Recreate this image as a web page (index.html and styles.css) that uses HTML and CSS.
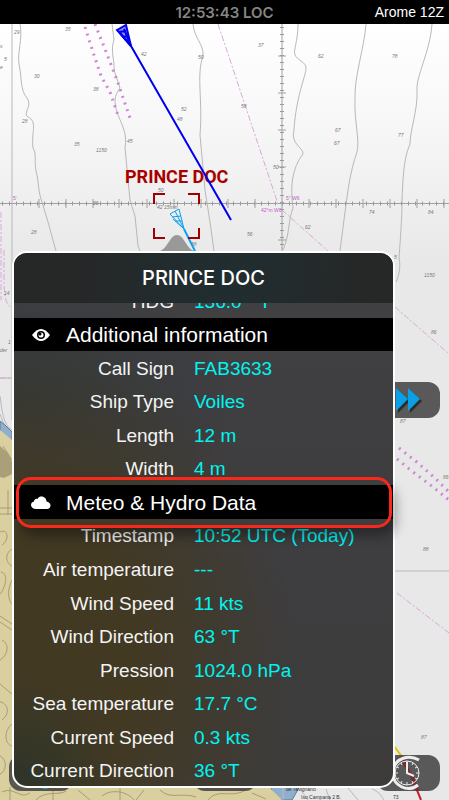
FILE: index.html
```html
<!DOCTYPE html>
<html lang="en">
<head>
    <meta charset="UTF-8">
    <meta name="viewport" content="width=device-width, initial-scale=1.0">
    <title>PRINCE DOC</title>
    <link rel="stylesheet" href="styles.css">
</head>
<body>
    <header class="status-bar">
        <span></span>
        <time class="clock">12:53:43 LOC</time>
        <span class="model">Arome 12Z</span>
    </header>

    <main class="chart">
        <svg class="map" viewBox="0 24 449 776" preserveAspectRatio="xMinYMin slice" aria-hidden="true">
            <!-- depth contours -->
            <g class="contour">
                <path d="M20 24C23 40 17 52 19 64C22 78 20 90 27 98C33 106 22 114 28 117C38 122 31 132 33 148C37 155 34 160 36 171C39 182 38 192 42 202L48 222L56 251"/>
                <path d="M112 24L114 40C110 50 115 62 114 70L120 88C114 96 114 102 117 112C120 122 128 132 125 148L130 200L135 216L138 246L140 251"/>
                <path d="M193 24C194 38 204 44 203 56C196 76 203 100 200 135L205 190L210 222L214 251"/>
                <path d="M298 24C298 42 293 50 295 55C297 60 306 62 306 68C306 76 296 96 294 130C290 144 304 148 303 154C292 168 290 186 293 208C288 220 290 234 283 250"/>
                <path d="M366 24C364 50 354 76 355 100C354 120 360 140 357 152C350 172 348 190 345 212L340 251"/>
                <path d="M432 24C430 52 416 76 417 90C418 110 410 130 410 144C403 160 403 180 402 200C402 216 401 230 399 258C401 266 399 276 396 282"/>
                <path d="M12 24V420M0 571H12M395 571H449M0 378H12"/>
                <path d="M0 396C2 410 3 425 12 430M0 414C4 424 6 432 12 435"/>
            </g>
            <!-- graduated meridian and parallel -->
            <path class="scale" d="M282 24V251M0 203.500H449"/>
            <path class="ticks" d="M282 27V251" stroke-width="4"/>
            <path class="ticks" d="M2 203.500H449" stroke-width="4"/>
            <path class="scale" d="M278 56H286M278 93H286M278 130H286M278 167H286M278 240H286M39 199V208M66 199V208M93 199V208M119 199V208M147 199V208M174 199V208M201 199V208M228 199V208M255 199V208M309 199V208M336 199V208M363 199V208M390 199V208M417 199V208M444 199V208"/>
            <!-- traffic limits -->
            <g class="limit">
                <path d="M218 24L278 204M282 210L328 251M395 307L449 354M397 593L449 633"/>
                <path d="M4 250V285C5 300 6 304 12 308M1 212V300"/>
                <path d="M0 378H12"/>
            </g>
            <g class="dots">
                <path d="M85 27L93 52L101 76L110 92L119 118"/>
                <path d="M95 24L103 44L110 62L117 80L130 118"/>
                <path d="M399 448L418 463L436 479L449 492"/>
                <path d="M397 459L413 472L433 487L449 500"/>
            </g>
            <!-- soundings -->
            <g class="sounding">
                <text x="14" y="34">29</text><text x="65" y="31">35</text><text x="141" y="56">42</text>
                <text x="34" y="78">30</text><text x="93" y="91">38</text><text x="177" y="121">48</text>
                <text x="181" y="111">52</text><text x="22" y="123">28</text><text x="198" y="59">50</text>
                <text x="258" y="47">37</text><text x="318" y="58">62</text><text x="392" y="58">78</text>
                <text x="241" y="108">58</text><text x="335" y="132">67</text><text x="334" y="145">67</text>
                <text x="398" y="137">77</text><text x="74" y="146">35</text><text x="96" y="152">1150</text>
                <text x="127" y="143">45</text><text x="273" y="169">50</text><text x="93" y="205">36</text>
                <text x="31" y="234">28</text><text x="247" y="236">56</text><text x="305" y="229">62</text>
                <text x="369" y="214">74</text><text x="428" y="214">84</text><text x="191" y="246">58</text>
                <text x="158" y="192">50</text><text x="157" y="209">42 15min</text>
                <text x="394" y="259">5</text><text x="424" y="277">1150</text><text x="431" y="334">86</text>
                <text x="400" y="423">87</text><text x="443" y="479">86</text><text x="423" y="551">88</text>
                <text x="421" y="739">87</text><text x="0" y="48">s</text><text x="4" y="61">5</text>
                <text x="0" y="69">e</text><text x="4" y="295">14</text><text x="8" y="344">1</text><text x="0" y="352">der</text>
            </g>
            <g class="place">
                <text x="13" y="200">5'</text>
                <text x="286" y="200">5'' W6</text>
                <text x="261" y="212">42°m W6</text>
            </g>
            <!-- land -->
            <path class="shallow" d="M0 421L5 425L12 432V442H0ZM270 786H300L292 800H276Z"/>
            <path class="land" d="M0 430L12 440V786H268L282 800H0Z"/>
            <path class="town" d="M0 446L8 453L12 462V474L4 478L0 477Z"/>
            <g class="relief">
                <path d="M0 456L12 472M3 446L12 460M0 508H12M0 514H12M8 490V515M0 532C8 528 10 540 2 545M12 549C4 554 6 563 12 566M1 572C10 574 4 590 0 594M12 580C7 590 8 600 12 604M0 616L12 624M0 622L12 630M2 640C10 644 8 655 0 660M0 684L12 694M0 702C6 702 12 712 2 720M12 724C4 730 4 744 12 746M0 756C8 760 6 772 0 774"/>
                <path d="M10 787V800M53 790V800M120 788V800M2 792C14 786 20 800 30 793M36 800C44 790 60 796 66 791M78 790L90 800M102 796C112 788 128 792 134 800M136 800L144 790M160 790C170 800 182 792 196 797M208 800C218 788 230 798 244 791M252 793L266 799"/>
            </g>
            <g class="contour">
                <path d="M300 789L308 800M326 789L330 800M348 788L358 800M372 789C380 792 382 797 384 800M283 788V800"/>
            </g>
            <g class="place-dark">
                <text x="286" y="791">de Tavignano</text>
                <text x="301" y="799">Iso Campana 2 B.</text>
                <text x="393" y="799">73</text>
            </g>
            <path class="route-yellow" d="M394 746L403 758"/>
            <path class="route-red" d="M400 757L412 778L421 800"/>
            <!-- vessels -->
            <text class="vessel-name" x="125" y="183">PRINCE DOC</text>
            <g class="vessel-blue">
                <path class="hull" d="M117 30L126 25L131 46Z"/>
                <path d="M131 46L231 220M120 33L131 46L124 29M119 32L126 31M123 37L128 36"/>
            </g>
            <g class="vessel-cyan">
                <path d="M184 229L195 251"/>
                <path class="hull" d="M170 214L179 209L184 229ZM173 219L184 229L175 211M172 217L181 216M175 221L182 221"/>
            </g>
            <path class="target" d="M154 204V194H165M188 194H199V204M154 228V238H165M188 238H199V228"/>
            <path class="pointer" d="M160 251C168 248 170 235 177 235C184 235 186 248 194 251Z"/>
        </svg>

        <button class="map-button forward" aria-label="Forward">
            <svg viewBox="0 0 64 36" aria-hidden="true">
                <path class="forward-shadow" d="M22 8L34 19L22 31ZM34 8L46 19L34 31Z"/>
                <path class="forward-arrow" d="M20 6L32 17L20 29ZM32 6L44 17L32 29Z"/>
            </svg>
        </button>

        <nav class="toolbar">
            <button class="map-button" aria-label="Layers">
                <svg viewBox="0 0 64 36" aria-hidden="true">
                    <circle class="layer-dot" cx="36" cy="28" r="6"/>
                </svg>
            </button>
            <button class="map-button" aria-label="Center"></button>
            <button class="map-button" aria-label="Time">
                <svg viewBox="0 0 64 36" aria-hidden="true">
                    <path class="route-dim" d="M25 2L37 24L45 44"/>
                    <g class="dial">
                        <circle cx="31" cy="18" r="12"/>
                        <path d="M31 6V9M31 27V30M19 18H22M40 18H43M25 8L26 10M37 8L36 10M21 12L23 13M41 12L39 13M21 24L23 23M25 28L26 26M37 28L36 26M41 24L39 23"/>
                        <path class="hands" d="M31 7V18L38 21"/>
                        <path class="ring" d="M43 5C33 -1 18 3 17 17C16 31 32 38 42 30"/>
                    </g>
                </svg>
            </button>
        </nav>

        <section class="popover">
            <h1 class="popover-title">PRINCE DOC</h1>
            <div class="popover-body">
                <table class="details">
                    <tbody>
                        <tr><th scope="row">HDG</th><td>136.0 ° T</td></tr>
                    </tbody>
                    <tbody>
                        <tr class="section">
                            <th colspan="2" scope="rowgroup">
                                <div class="section-title">
                                    <svg viewBox="0 0 20 16" aria-hidden="true">
                                        <path fill="#fff" d="M1 8C4 4 7 2 10 2S16 4 19 8C16 12 13 14 10 14S4 12 1 8Z"/>
                                        <circle cx="10" cy="8" r="4" fill="#000"/>
                                        <circle cx="10" cy="8" r="2.500" fill="#fff"/>
                                        <circle cx="9" cy="7" r="1.500" fill="#000"/>
                                    </svg>
                                    Additional information
                                </div>
                            </th>
                        </tr>
                        <tr><th scope="row">Call Sign</th><td>FAB3633</td></tr>
                        <tr><th scope="row">Ship Type</th><td>Voiles</td></tr>
                        <tr><th scope="row">Length</th><td>12 m</td></tr>
                        <tr><th scope="row">Width</th><td>4 m</td></tr>
                    </tbody>
                    <tbody>
                        <tr class="section">
                            <th colspan="2" scope="rowgroup">
                                <div class="section-title">
                                    <svg viewBox="0 0 20 16" aria-hidden="true">
                                        <path fill="#fff" d="M5 14C2 14 0 12 0 10C0 8 1 7 3 6.500C3 4.500 5 3.500 6.500 4C7.500 2 9 1.500 10.500 1.500C13.500 1.500 15.500 4 15.500 6.500C18 7 19.500 8.500 19.500 10.500C19.500 12.500 18 14 16 14Z"/>
                                    </svg>
                                    Meteo &amp; Hydro Data
                                </div>
                                <span class="highlight"></span>
                            </th>
                        </tr>
                        <tr><th scope="row">Timestamp</th><td>10:52 UTC (Today)</td></tr>
                        <tr><th scope="row">Air temperature</th><td>---</td></tr>
                        <tr><th scope="row">Wind Speed</th><td>11 kts</td></tr>
                        <tr><th scope="row">Wind Direction</th><td>63 °T</td></tr>
                        <tr><th scope="row">Pression</th><td>1024.0 hPa</td></tr>
                        <tr><th scope="row">Sea temperature</th><td>17.7 °C</td></tr>
                        <tr><th scope="row">Current Speed</th><td>0.3 kts</td></tr>
                        <tr><th scope="row">Current Direction</th><td>36 °T</td></tr>
                    </tbody>
                </table>
            </div>
        </section>
    </main>
</body>
</html>
```
FILE: styles.css
```css
* {
    box-sizing: border-box;
}
body {
    margin: 0;
    height: 100vh;
    display: flex;
    flex-direction: column;
    font-family: "Liberation Sans", Arial, sans-serif;
    background-color: #e8e8e8;
    overflow: hidden;
}

/* Status bar */
.status-bar {
    display: grid;
    grid-template-columns: 1fr auto 1fr;
    align-items: center;
    height: 24px;
    padding: 0 5px;
    background-color: #000;
    color: #fff;
    font-size: 14px;
}
.clock {
    color: #858585;
    font-family: Inter, "Liberation Sans", sans-serif;
    font-size: 15px;
    font-weight: 600;
}
.model {
    text-align: right;
}

/* Chart */
.chart {
    position: relative;
    flex: 1;
    min-height: 0;
    display: flex;
    padding: 227px 54px 12px 12px;
    background: linear-gradient(#fff, #f8f8f8 90px, #e8e8e8 240px);
}
.map {
    position: absolute;
    inset: 0;
    width: 100%;
    height: 100%;
}
.contour {
    fill: none;
    stroke: #b8b8b8;
    stroke-width: 1px;
}
.scale {
    fill: none;
    stroke: #a0a0a0;
    stroke-width: 1px;
}
.ticks {
    stroke: #999;
    stroke-dasharray: 1 6;
}
.limit {
    fill: none;
    stroke: #d9a8dc;
    stroke-width: 1px;
    stroke-dasharray: 6 2 2 2;
}
.dots {
    fill: none;
    stroke: #cf86d3;
    stroke-width: 3px;
    stroke-dasharray: 2 5;
}
.sounding {
    fill: #777;
    font-size: 5px;
    font-style: italic;
}
.place {
    fill: #c05cc6;
    font-size: 5px;
}
.place-dark {
    fill: #333;
    font-size: 5px;
}
.shallow {
    fill: #8fb0cc;
    stroke: #5d7890;
}
.land {
    fill: #dacf9f;
}
.town {
    fill: #aaa078;
}
.relief {
    fill: none;
    stroke: #a79c74;
    stroke-width: 1px;
}
.route-yellow {
    stroke: #dcc400;
    stroke-width: 2px;
}
.route-red {
    fill: none;
    stroke: #c4202c;
    stroke-width: 2px;
}
.route-dim {
    fill: none;
    stroke: #7a2a30;
    stroke-width: 3px;
}
.vessel-blue {
    fill: none;
    stroke: #0000f0;
    stroke-width: 2px;
}
.vessel-blue .hull {
    fill: #8a8af8;
}
.vessel-cyan {
    fill: none;
    stroke: #0aa2f0;
    stroke-width: 2px;
}
.vessel-cyan .hull {
    stroke-width: 1px;
}
.target {
    fill: none;
    stroke: #a00000;
    stroke-width: 2px;
}
.pointer {
    fill: #999;
}
.vessel-name {
    fill: #a80000;
    font-family: Roboto, "Liberation Sans", sans-serif;
    font-size: 18px;
    font-weight: bold;
}

/* Map buttons */
.map-button {
    width: 64px;
    height: 36px;
    padding: 0;
    border: none;
    border-radius: 12px;
    background-color: rgba(64, 64, 64, 0.85);
    overflow: hidden;
    cursor: pointer;
}
.map-button svg {
    display: block;
    width: 64px;
    height: 36px;
}
.forward {
    position: absolute;
    top: 358px;
    right: 9px;
}
.forward-arrow {
    fill: #0aa0e8;
}
.forward-shadow {
    fill: #2c2c2c;
}
.layer-dot {
    fill: #2a9be0;
}
.dial {
    fill: none;
    stroke: #eee;
    stroke-width: 1px;
}
.dial .hands {
    stroke-width: 2px;
}
.dial .ring {
    stroke-width: 3px;
}
.toolbar {
    position: absolute;
    left: 9px;
    right: 9px;
    bottom: 9px;
    display: flex;
    justify-content: space-between;
}

/* Popover */
.popover {
    position: relative;
    flex: 1;
    min-width: 0;
    display: flex;
    flex-direction: column;
    border: 2px solid #fff;
    border-radius: 15px;
    background:
        radial-gradient(circle at 0 100%, #2d3429, transparent 110px),
        radial-gradient(ellipse 280px 340px at 0 76%, #423923 45%, transparent),
        radial-gradient(ellipse 220px 140px at 0 28%, #30383e, transparent),
        linear-gradient(#414042, #3e3d40 50%, #3d3c3b);
}
.popover-title {
    position: relative;
    z-index: 1;
    margin: 0;
    height: 50px;
    line-height: 50px;
    border-radius: 13px 13px 0 0;
    background: radial-gradient(circle at 55% 50%, #202e31, #262727 150px);
    color: #fff;
    font-family: Inter, "Liberation Sans", sans-serif;
    font-size: 20px;
    font-weight: 500;
    text-align: center;
}
/* rows are cut at the top and bottom, the highlight shadow may leave on the right */
.popover-body {
    flex: 1;
    min-height: 0;
    clip-path: inset(0 -24px 0 0);
}
.details {
    width: 100%;
    height: calc(100% + 20px);
    margin-top: -19px;
    border-collapse: collapse;
    table-layout: fixed;
    font-size: 19px;
    line-height: 24px;
    white-space: nowrap;
}
.details th {
    width: 160px;
    padding: 2px 0 0;
    color: #f4f4f4;
    font-weight: normal;
    text-align: right;
}
.details td {
    padding: 2px 0 0 20px;
    color: #00f4f0;
}
.details .section th {
    position: relative;
    background-color: #000;
    color: #fff;
    font-size: 21px;
}
.section-title {
    display: flex;
    align-items: center;
    gap: 15px;
    padding-left: 17px;
}
.section-title svg {
    width: 20px;
    height: 16px;
}
.highlight {
    position: absolute;
    inset: -8px 1px -9px 2px;
    border: 3px solid #f8281c;
    border-radius: 15px;
    box-shadow: 4px 8px 12px rgba(0, 0, 0, 0.35);
}
```
